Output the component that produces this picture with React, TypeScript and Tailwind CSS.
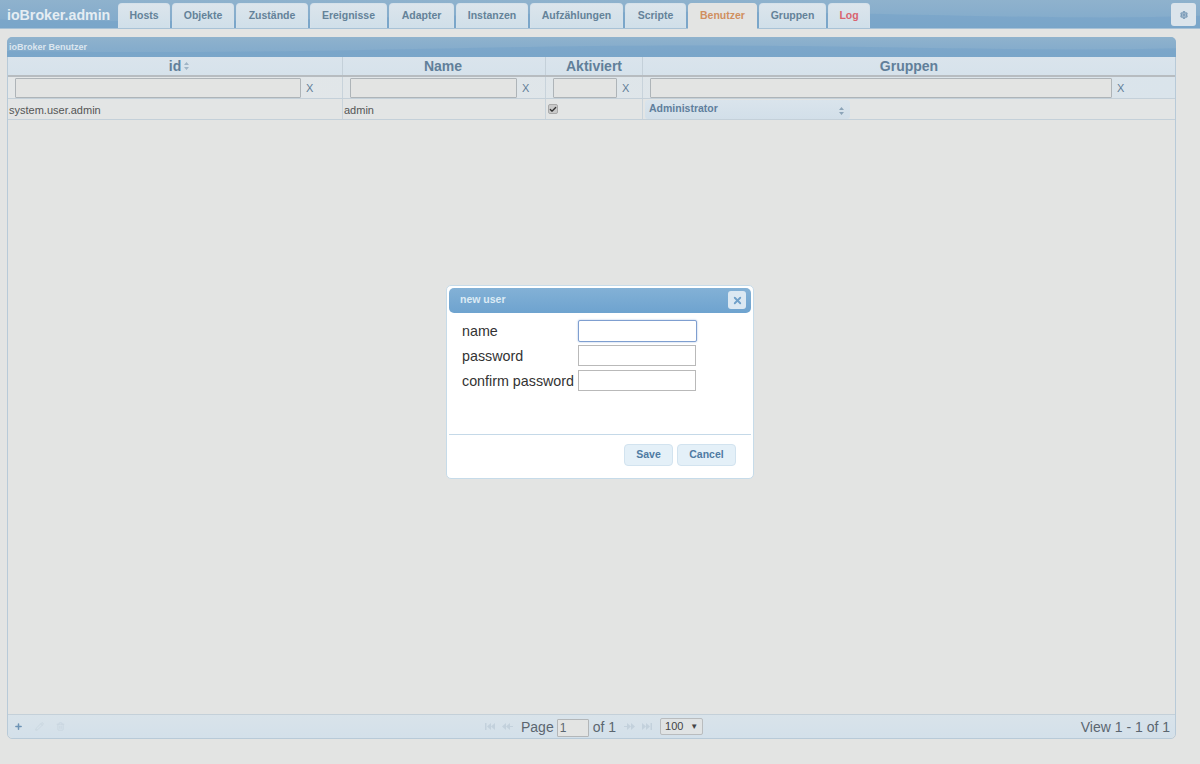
import { Check, Pencil, Plus, Settings, Trash2, X } from "lucide-react";

const tabs = [
  { label: "Hosts", w: "w-[52px]" },
  { label: "Objekte", w: "w-[62px]" },
  { label: "Zustände", w: "w-[72px]" },
  { label: "Ereignisse", w: "w-[77px]" },
  { label: "Adapter", w: "w-[65px]" },
  { label: "Instanzen", w: "w-[72px]" },
  { label: "Aufzählungen", w: "w-[93px]" },
  { label: "Scripte", w: "w-[61px]" },
  { label: "Benutzer", w: "w-[69px]", active: true },
  { label: "Gruppen", w: "w-[67px]" },
  { label: "Log", w: "w-[42px]", red: true },
];

const columns = [
  { key: "id", w: "w-[335px]", input: "w-[286px]", head: "pl-[8px]" },
  { key: "Name", w: "w-[203px]", input: "w-[167px]", head: "pr-[2px]" },
  { key: "Aktiviert", w: "w-[97px]", input: "w-[64px]", head: "" },
  { key: "Gruppen", w: "flex-1", input: "w-[462px]", head: "" },
];

function Wave({ className }: { className: string }) {
  return (
    <svg className={className} viewBox="0 0 1200 30" preserveAspectRatio="none">
      <path d="M0 21 C300 28 500 10 760 13 C950 15 1080 22 1200 17 L1200 30 L0 30 Z" fill="#74a3c9" opacity="0.55" />
    </svg>
  );
}

function SortArrows({ className }: { className: string }) {
  return (
    <svg className={className} width="5" height="8" viewBox="0 0 5 8">
      <path d="M2.5 0 L5 3 L0 3 Z M0 5 L5 5 L2.5 8 Z" fill="currentColor" />
    </svg>
  );
}

function PageArrows({ flip }: { flip?: boolean }) {
  return (
    <svg className={flip ? "-scale-x-100" : ""} width="28" height="7" viewBox="0 0 28 7">
      <path d="M0 0 H1.5 V7 H0 Z M6 0 V7 L2 3.5 Z M10 0 V7 L6 3.5 Z M21 0 V7 L17 3.5 Z M25 0 V7 L21 3.5 Z M25 3 H28 V4 H25 Z" fill="#c3d1dc" />
    </svg>
  );
}

function Field({ focus }: { focus?: boolean }) {
  return (
    <div
      className={
        focus
          ? "w-[119px] h-[22px] bg-white border border-[#7f9fd0] rounded-[2px] shadow-[0_0_2px_#9db8e0]"
          : "w-[118px] h-[21px] bg-white border border-[#b9b9b9]"
      }
    />
  );
}

export default function App() {
  return (
    <div className="relative w-[1200px] h-[764px] overflow-hidden bg-[#e3e4e3] font-['Liberation_Sans',Arial,sans-serif]">
      {/* Top bar */}
      <header className="relative h-[29px] flex items-start bg-[linear-gradient(#8fb2cd,#7fa9cb)] border-b border-[#a8c2d6]">
        <Wave className="absolute inset-0 w-full h-full" />
        <div className="relative w-[118px] h-[28px] pl-[7px] pt-[6px] text-[14.2px] leading-[18px] font-bold text-[#e5edf3] whitespace-nowrap">
          ioBroker.admin
        </div>
        <nav className="relative flex gap-[2px] pt-[3px]">
          {tabs.map((t) => (
            <div
              key={t.label}
              className={`${t.w} flex justify-center pt-[4px] rounded-t-[4px] text-[10.5px] leading-[14px] font-bold border-x border-t ${
                t.active
                  ? "h-[27px] bg-[#e3e4e3] border-[#e3e4e3] text-[#d08f5f]"
                  : "h-[25px] bg-[linear-gradient(#dce5ec,#d0dfe9)] border-[#d5e1ea]"
              } ${t.red ? "text-[#d9636f]" : t.active ? "" : "text-[#648299]"}`}
            >
              {t.label}
            </div>
          ))}
        </nav>
        <div className="relative ml-auto mr-[4px] mt-[3px] w-[25px] h-[23px] rounded-[3px] bg-[#dbe4eb] flex items-center justify-center">
          <Settings size={8} strokeWidth={4} className="text-[#7c9cb8]" />
        </div>
      </header>

      {/* Users grid */}
      <section className="ml-[7px] mt-[8px] w-[1169px] h-[702px] flex flex-col border border-[#b8cad8] rounded-[5px]">
        <div className="relative h-[20px] -mx-px -mt-px rounded-t-[5px] bg-[linear-gradient(#8fb2cd,#7fa9cb)] overflow-hidden shrink-0">
          <Wave className="absolute inset-0 w-full h-full" />
          <div className="relative pl-[2px] pt-[4px] text-[9px] leading-[12px] font-bold text-[#dbe6ef]">
            ioBroker Benutzer
          </div>
        </div>

        <div className="flex h-[20px] shrink-0 bg-[linear-gradient(#dae4ec,#d6e2eb)] border-b-2 border-[#b7bcc0]">
          {columns.map((c, i) => (
            <div
              key={c.key}
              className={`${c.w} ${c.head} flex items-center justify-center gap-[3px] text-[14px] leading-[18px] font-bold text-[#617f9a] ${
                i < 3 ? "border-r border-[#c4d0d9]" : ""
              }`}
            >
              {c.key}
              {i === 0 && <SortArrows className="text-[#9fb4c6]" />}
            </div>
          ))}
        </div>

        <div className="flex h-[22px] shrink-0 bg-[linear-gradient(90deg,#e4e7e8,#dae4eb)] border-b border-[#c4d0d9]">
          {columns.map((c, i) => (
            <div
              key={c.key}
              className={`${c.w} flex items-center pl-[7px] ${i < 3 ? "border-r border-[#c8d3db]" : ""}`}
            >
              <div className={`${c.input} h-[20px] bg-[#e3e4e3] border border-[#aeb4b8] rounded-[1px]`} />
              <div className="ml-[5px] text-[11px] leading-[14px] text-[#5f7d97]">X</div>
            </div>
          ))}
        </div>

        <div className="flex h-[21px] shrink-0 bg-[#e3e5e5] border-b border-[#c4d0d9] text-[11px] leading-[14px] text-[#555555]">
          <div className="w-[335px] flex items-center pl-[1px] pt-[1px] border-r border-[#c8d3db]">system.user.admin</div>
          <div className="w-[203px] flex items-center pl-[1px] pt-[1px] border-r border-[#c8d3db]">admin</div>
          <div className="w-[97px] flex items-center pl-[2px] border-r border-[#c8d3db]">
            <div className="w-[10px] h-[10px] rounded-[2px] bg-[#c9c9c9] border border-[#a9a9a9] flex items-center justify-center">
              <Check size={9} strokeWidth={4} className="text-[#333333]" />
            </div>
          </div>
          <div className="flex-1 flex items-center pl-[2px]">
            <div className="w-[205px] h-[19px] flex items-start justify-between pl-[4px] pr-[6px] pt-[1px] rounded-[3px] bg-[linear-gradient(#dae4ec,#d2dfe9)] text-[10.5px] font-bold text-[#5f7f9d]">
              Administrator
              <SortArrows className="mt-[6px] text-[#8ca4b8]" />
            </div>
          </div>
        </div>

        <div className="flex-1" />

        {/* Pager */}
        <div className="flex items-center h-[24px] shrink-0 bg-[linear-gradient(#d9e3ea,#d3e0ea)] border-t border-[#c4d0d9] rounded-b-[5px] text-[#5b6670]">
          <div className="w-[477px] flex items-center gap-[12px] pl-[6px]">
            <Plus size={9} strokeWidth={4} className="text-[#6d93b5]" />
            <Pencil size={9} className="text-[#c7d4de]" />
            <Trash2 size={9} className="text-[#c7d4de]" />
          </div>
          <div className="flex items-center">
            <PageArrows />
            <span className="text-[14px] leading-[18px] ml-[8px]">Page</span>
            <div className="ml-[3px] w-[32px] h-[18px] mt-[2px] bg-[#e3e4e3] border border-[#b3b6b8] rounded-[1px] pl-[2px] text-[12px] leading-[17px]">
              1
            </div>
            <span className="text-[14px] leading-[18px] ml-[4px]">of 1</span>
            <div className="mx-[8px]">
              <PageArrows flip />
            </div>
            <div className="w-[43px] h-[17px] bg-[#e0e3e4] border border-[#b9bcbe] rounded-[2px] flex items-center justify-between pl-[4px] pr-[4px] text-[11px] text-[#444444]">
              100
              <span className="text-[8px]">▼</span>
            </div>
          </div>
          <div className="ml-auto pr-[5px] text-[14px] leading-[18px]">View 1 - 1 of 1</div>
        </div>
      </section>

      {/* New user dialog */}
      <div className="absolute left-[446px] top-[285px] w-[308px] h-[194px] flex flex-col p-[2px] bg-white border border-[#c6dbe9] rounded-[5px]">
        <div className="relative h-[25px] shrink-0 rounded-[5px] bg-[linear-gradient(#83b1d6,#6ea3cf)] overflow-hidden">
          <div className="pl-[11px] pt-[5px] text-[10.5px] leading-[13px] font-bold text-[#dcebf5]">new user</div>
          <div className="absolute right-[5px] top-[3px] w-[18px] h-[18px] rounded-[3px] bg-[#dbe8f2] flex items-center justify-center">
            <X size={11} strokeWidth={4} className="text-[#6fa0c9]" />
          </div>
        </div>
        <div className="flex-1 pl-[13px] pt-[5px] text-[14.3px] leading-[16px] text-[#333333]">
          <div className="flex items-center h-[25px]">
            <span className="w-[116px]">name</span>
            <Field focus />
          </div>
          <div className="flex items-center h-[25px]">
            <span className="w-[116px]">password</span>
            <Field />
          </div>
          <div className="flex items-center h-[25px]">
            <span className="w-[116px] whitespace-nowrap">confirm password</span>
            <Field />
          </div>
        </div>
        <div className="h-[42px] shrink-0 border-t border-[#c5d9e8] flex justify-end gap-[4px] pt-[9px] pr-[15px]">
          <div className="w-[49px] h-[22px] rounded-[4px] bg-[#e4f0f8] border border-[#d2e3ef] flex items-center justify-center text-[10.5px] font-bold text-[#4f7ba3]">
            Save
          </div>
          <div className="w-[59px] h-[22px] rounded-[4px] bg-[#e4f0f8] border border-[#d2e3ef] flex items-center justify-center text-[10.5px] font-bold text-[#4f7ba3]">
            Cancel
          </div>
        </div>
      </div>
    </div>
  );
}
